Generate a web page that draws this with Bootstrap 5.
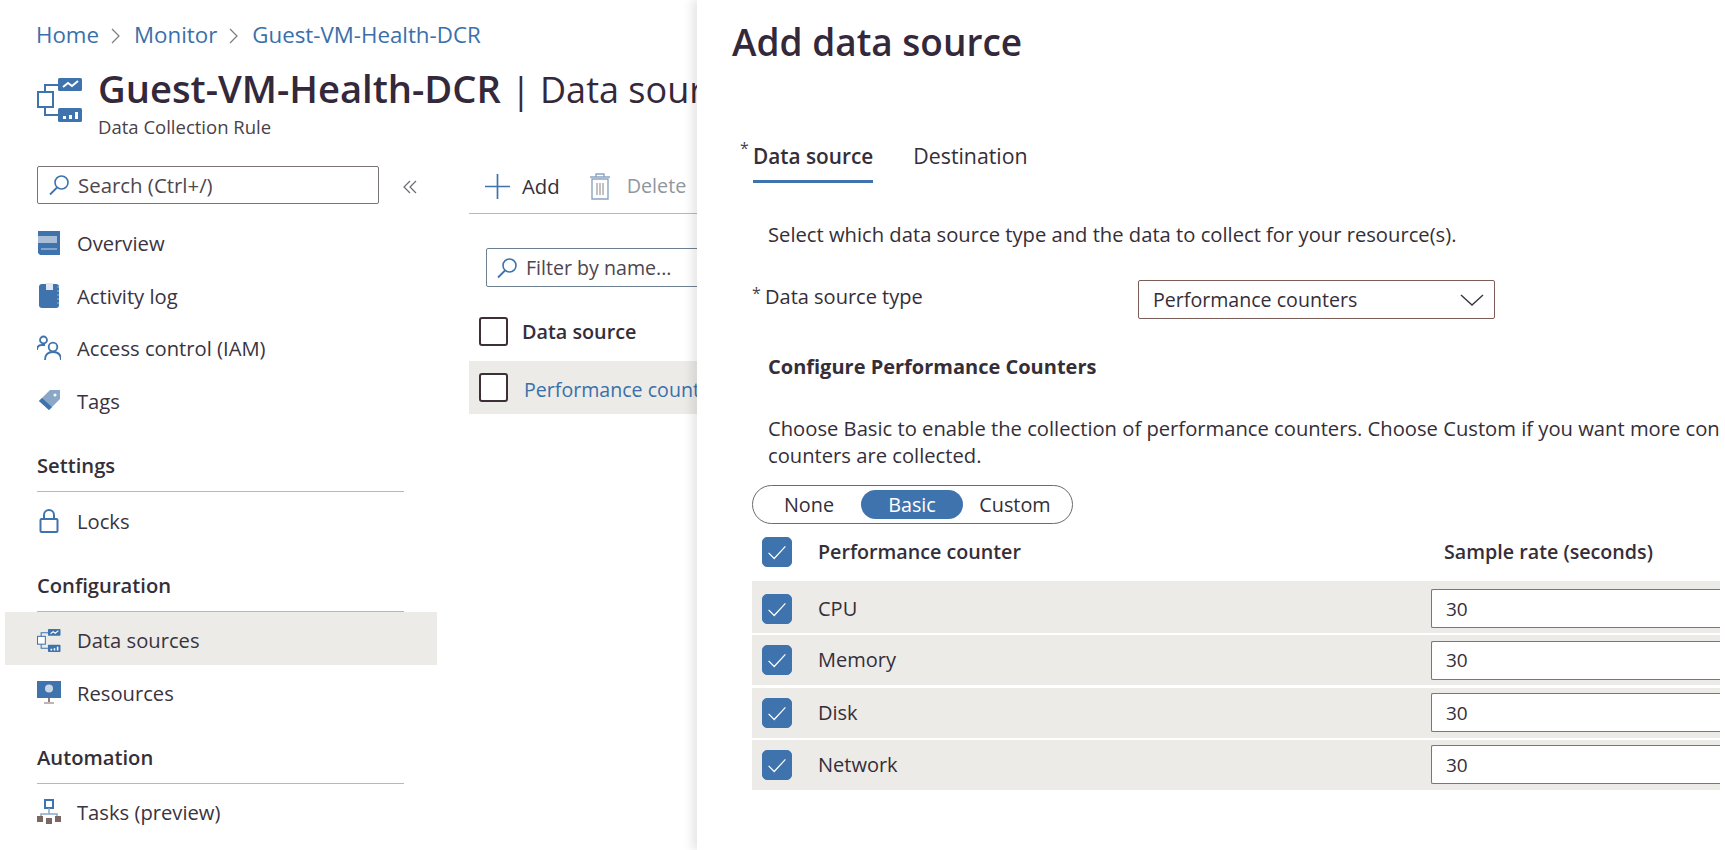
<!DOCTYPE html>
<html lang="en">
<head>
<meta charset="utf-8">
<title>Add data source</title>
<link href="https://cdn.jsdelivr.net/npm/bootstrap@5.3.0/dist/css/bootstrap.min.css" rel="stylesheet">
<style>
:root{--az-blue:#3f73ad;--az-text:#352e38;--az-row:#ecebe8;--az-line:#a9bccf;}
html,body{height:850px;overflow:hidden;background:#fff;}
body{font-family:"Open Sans","Noto Sans",sans-serif;color:var(--az-text);font-size:20px;}
.shell{height:850px;width:1720px;overflow:hidden;}
.blade{width:697px;flex:none;overflow:hidden;}
.crumbs{--bs-breadcrumb-divider:none;--bs-breadcrumb-item-padding-x:0;margin:0;padding:18px 0 0 36px;height:68px;font-size:22.3px;white-space:nowrap;flex-wrap:nowrap;}
.crumbs .breadcrumb-item+.breadcrumb-item::before{display:none;}
.crumbs a{color:#3a70aa;text-decoration:none;}
.crumbs svg{margin:0 13px 0 12px;vertical-align:-1px;}
.bladehead{padding-left:37px;height:98px;white-space:nowrap;}
.bladehead h1{font-size:38.2px;line-height:38px;margin:0;font-weight:600;color:#33293a;padding-top:1px;}
.bladehead h1 span{font-weight:400;font-size:36px;}
.bladesub{font-size:18.5px;line-height:22px;margin-top:7px;color:#4a4148;}
.sidebar{width:432px;flex:none;margin-left:5px;}
.searchrow{padding-left:32px;height:49px;}
.searchbox{width:342px;height:38px;border:1px solid #7b7474;border-radius:2px;padding:0 10px;font-size:20.4px;color:#4d4650;}
.collapse-mark{margin:14px 0 0 24px;}
.navrow{height:52.6px;padding:4px 0 0 32px;font-size:20.2px;color:#3a3340;text-decoration:none;}
.navrow svg{width:24px;height:26px;flex:none;margin-right:16px;}
.navrow.is-on{background:var(--az-row);}
.grouphead{height:67px;margin:0 33px 0 32px;padding-top:26px;line-height:28px;font-size:20.2px;font-weight:600;border-bottom:1px solid var(--az-line);}
.mainpane{flex:1;min-width:0;overflow:hidden;margin-left:32px;}
.cmdbar{height:49px;border-bottom:1px solid var(--az-line);margin-top:-1px;padding:0 0 6px 16px;white-space:nowrap;font-size:20.3px;}
.cmdbar .cmd-off{color:#8f979f;font-size:19.8px;margin-left:16px;}
.trash{margin-left:29px;}
.filterbox{width:300px;height:39px;border:1px solid #6f7f92;border-radius:2px;margin:34px 0 0 17px;padding:0 9px;font-size:19.6px;color:#4d4650;white-space:nowrap;}
.listhead{height:29px;margin:30px 0 15px 10px;font-weight:600;font-size:19.8px;}
.listrow{height:53px;background:var(--az-row);padding-left:10px;font-size:19.6px;white-space:nowrap;}
.listrow a{color:#3a70aa;text-decoration:none;padding-top:5px;margin-left:2px;}
.plainbox{width:29px;height:29px;flex:none;margin:0 14px 0 0;border:2px solid #3c2f38;border-radius:3px;background:#fff;}
.panel{width:1023px;flex:none;height:850px;overflow:hidden;background:#fff;box-shadow:-5px 0 9px rgba(60,50,50,.12);position:relative;}
.panel h2{font-size:37px;font-weight:600;line-height:44px;margin:20px 0 0 35px;color:#33293a;}
.tabsrow{margin:64px 0 0 43px;height:55px;font-size:21.3px;}
.tabsrow .tabitem{height:55px;padding-top:13px;line-height:30px;margin-right:40px;position:relative;}
.tabsrow .tabitem.is-on{border-bottom:3px solid var(--az-blue);font-weight:600;font-size:20.8px;margin-left:13px;}
.req{position:absolute;left:-13px;top:11px;font-size:16px;line-height:18px;color:#4a4148;font-weight:400;}
.panelbody{padding-left:71px;font-size:20.2px;white-space:nowrap;}
.intro{margin:38px 0 0;line-height:26px;}
.typerow{margin:33px 0 0;height:39px;}
.typelabel{width:373px;position:relative;margin-left:-3px;padding-bottom:6px;font-size:20px;}
.typelabel .req{left:-13px;top:2px;}
.typeselect{width:357px;height:39px;padding:0 14px;font-size:19.6px;color:var(--az-text);border:1px solid #7b5d58;border-radius:2px;background-size:26px 14px;background-position:right 9px center;--bs-form-select-bg-img:url("data:image/svg+xml,%3csvg xmlns='http://www.w3.org/2000/svg' viewBox='0 0 26 14'%3e%3cpath fill='none' stroke='%233a3340' stroke-width='1.4' d='M2 2l11 10L24 2'/%3e%3c/svg%3e");}
.cfghead{margin:35px 0 0;line-height:26px;font-weight:700;font-size:20px;}
.cfgtext{margin:35px 0 0;line-height:26.5px;}
.segwrap{margin:17px 0 0 -16px;width:321px;height:39px;border:1px solid #6f6a6d;border-radius:20px;padding:4px;}
.segbtn{--bs-btn-padding-y:0;--bs-btn-padding-x:0;--bs-btn-font-size:19.8px;--bs-btn-color:var(--az-text);--bs-btn-hover-color:var(--az-text);--bs-btn-border-width:0;width:104px;height:29px;line-height:29px;border-radius:15px;}
.segbtn.is-on{background:var(--az-blue);color:#fff;width:102px;}
.counters{margin:13px 0 0 -16px;}
.countrow{padding-left:10px;height:30px;}
.counterhead{font-weight:600;height:44px;font-size:19.7px;line-height:30px;}
.counterlist{gap:2.3px;}
.countitem{background:var(--az-row);height:50px;padding-left:10px;font-size:20px;}
.countitem.first{height:52px;padding-top:3px;}
.tick{width:30px;height:30px;margin:0 26px 0 0;flex:none;border-radius:3px;background-size:100%;}
.tick:checked[type=checkbox]{background-color:var(--az-blue);border-color:var(--az-blue);--bs-form-check-bg-image:url("data:image/svg+xml,%3csvg xmlns='http://www.w3.org/2000/svg' viewBox='0 0 30 30'%3e%3cpath fill='none' stroke='%23fff' stroke-width='1.3' d='M6 16l6 6L24 9'/%3e%3c/svg%3e");}
.ratecol{margin-left:auto;width:289px;flex:none;}
.ratehead{padding-left:13px;}
.rateinput{height:39px;width:100%;border:1px solid #7c7577;border-right:0;border-radius:2px 0 0 2px;padding:0 14px;font-size:19px;color:var(--az-text);}
.hdicon{flex:none;margin:8px 15px 0 0;}
</style>
</head>
<body>
<svg width="0" height="0" class="d-block" aria-hidden="true">
  <symbol id="ic-dcr" viewBox="0 0 46 46">
    <path d="M8 16V9h13M8 31v8h13" fill="none" stroke="#3f73ad" stroke-width="2"/>
    <rect x="21" y="2" width="24" height="13" rx="1.5" fill="#3f73ad"/>
    <path d="M26 11l5-4 4 3 6-5" fill="none" stroke="#fff" stroke-width="2"/>
    <rect x="21" y="32" width="24" height="14" rx="1.5" fill="#3f73ad"/>
    <path d="M26 40h3v3h-3zM32 39h3v4h-3zM38 36h3v7h-3z" fill="#fff"/>
    <rect x="1" y="16" width="15" height="15" fill="#fff" stroke="#3f73ad" stroke-width="2"/>
  </symbol>
  <symbol id="ic-search" viewBox="0 0 22 22">
    <circle cx="13.5" cy="8.5" r="6.5" fill="none" stroke="#3f73ad" stroke-width="1.6"/>
    <path d="M9 13.5L2 20.5" stroke="#3f73ad" stroke-width="1.8" fill="none"/>
  </symbol>
</svg>

<div class="shell d-flex">
  <section class="blade d-flex flex-column">
    <ol class="breadcrumb crumbs">
      <li class="breadcrumb-item"><a href="#">Home</a><svg width="10" height="16" viewBox="0 0 10 16"><path d="M1 1l7 7-7 7" fill="none" stroke="#7b7b80" stroke-width="1.2"/></svg></li>
      <li class="breadcrumb-item"><a href="#">Monitor</a><svg width="10" height="16" viewBox="0 0 10 16"><path d="M1 1l7 7-7 7" fill="none" stroke="#7b7b80" stroke-width="1.2"/></svg></li>
      <li class="breadcrumb-item"><a href="#">Guest-VM-Health-DCR</a></li>
    </ol>
    <header class="bladehead d-flex">
      <svg width="46" height="46" class="hdicon"><use href="#ic-dcr"/></svg>
      <div>
        <h1>Guest-VM-Health-DCR <span>| Data sources</span></h1>
        <div class="bladesub">Data Collection Rule</div>
      </div>
    </header>
    <div class="d-flex flex-fill">
      <nav class="sidebar">
        <div class="searchrow d-flex">
          <div class="searchbox d-flex align-items-center gap-2"><svg width="22" height="22"><use href="#ic-search"/></svg><span>Search (Ctrl+/)</span></div>
          <svg class="collapse-mark" width="14" height="14" viewBox="0 0 14 14"><path d="M7 1L1 7l6 6M13 1L7 7l6 6" fill="none" stroke="#6d6a70" stroke-width="1.2"/></svg>
        </div>
        <a class="navrow d-flex align-items-center" href="#"><svg viewBox="0 0 24 26"><path d="M1 1h22v24H3l-2-2z" fill="#3f73ad"/><path d="M1 6h19v7H1z" fill="#a9bdd6"/><path d="M4 19h16" stroke="#c9d6e6" stroke-width="1"/></svg>Overview</a>
        <a class="navrow d-flex align-items-center" href="#"><svg viewBox="0 0 24 26"><rect x="2" y="1" width="20" height="24" rx="3" fill="#3f73ad"/><path d="M9 0h7v7H9z" fill="#dfe7f0"/><path d="M21 3v20" stroke="#9db5d1" stroke-dasharray="2 2"/></svg>Activity log</a>
        <a class="navrow d-flex align-items-center" href="#"><svg viewBox="0 0 24 26"><g fill="none" stroke="#3f73ad" stroke-width="1.8"><circle cx="6.5" cy="5" r="3.5"/><path d="M0 15c0-3 2-5 5-5h3"/><circle cx="16" cy="12" r="4.3"/><path d="M8 25c0-5 3-8 8-8s8 3 8 8"/></g></svg>Access control (IAM)</a>
        <a class="navrow d-flex align-items-center" href="#"><svg viewBox="0 0 24 26"><path d="M2 13L13 2l10 0v9L12 22z" fill="#8aa7c8"/><path d="M2 13l10 9 3-3L5 10z" fill="#3f73ad"/><circle cx="18" cy="7" r="1.5" fill="#fff"/></svg>Tags</a>
        <div class="grouphead">Settings</div>
        <a class="navrow d-flex align-items-center" href="#"><svg viewBox="0 0 24 26"><g fill="none" stroke="#3f73ad" stroke-width="2"><rect x="3.5" y="11" width="17" height="13" rx="1"/><path d="M7 11V7a5 5 0 0 1 10 0v4"/></g></svg>Locks</a>
        <div class="grouphead">Configuration</div>
        <a class="navrow is-on d-flex align-items-center" href="#"><svg viewBox="0 0 46 46"><use href="#ic-dcr"/></svg>Data sources</a>
        <a class="navrow d-flex align-items-center" href="#"><svg viewBox="0 0 24 26"><rect x="0" y="1" width="24" height="17" fill="#3f73ad"/><circle cx="12" cy="8.5" r="4" fill="#c9d6e6"/><path d="M11 18h2v4h-2z" fill="#8d7f7c"/><path d="M7 23h10" stroke="#a99e9a" stroke-width="1.5"/></svg>Resources</a>
        <div class="grouphead">Automation</div>
        <a class="navrow d-flex align-items-center" href="#"><svg viewBox="0 0 24 26"><rect x="8" y="1" width="8" height="8" fill="#fff" stroke="#3f73ad" stroke-width="2"/><path d="M12 9v6M4 17v-2h16v2" fill="none" stroke="#8aa7c8" stroke-width="1.5"/><path d="M0 17h6v6H0zM9 19h6v6H9zM18 17h6v6h-6z" fill="#7b6662"/></svg>Tasks (preview)</a>
      </nav>
      <div class="mainpane">
        <div class="cmdbar d-flex align-items-center">
          <svg width="25" height="25" viewBox="0 0 25 25" class="me-2"><path d="M12.5 0v25M0 12.5h25" stroke="#3f73ad" stroke-width="1.7"/></svg>
          <span class="ms-1">Add</span>
          <svg width="22" height="27" viewBox="0 0 22 27" class="trash"><g fill="none" stroke="#8aa4c0" stroke-width="1.4"><path d="M3 6h16v20H3zM1 4h20M7 4V1h8v3"/><path d="M8 10v12M11 10v12M14 10v12" stroke="#a7a7a7"/></g></svg>
          <span class="cmd-off">Delete</span>
        </div>
        <div class="filterbox d-flex align-items-center gap-2"><svg width="22" height="22"><use href="#ic-search"/></svg><span>Filter by name...</span></div>
        <div class="listhead d-flex align-items-center"><span class="plainbox"></span>Data source</div>
        <div class="listrow d-flex align-items-center"><span class="plainbox"></span><a href="#">Performance counters</a></div>
      </div>
    </div>
  </section>

  <section class="panel">
    <h2>Add data source</h2>
    <div class="tabsrow d-flex">
      <div class="tabitem is-on"><span class="req">*</span>Data source</div>
      <div class="tabitem">Destination</div>
    </div>
    <div class="panelbody">
      <p class="intro">Select which data source type and the data to collect for your resource(s).</p>
      <div class="typerow d-flex align-items-center">
        <div class="typelabel"><span class="req">*</span>Data source type</div>
        <select class="form-select typeselect" aria-label="Data source type"><option>Performance counters</option></select>
      </div>
      <p class="cfghead">Configure Performance Counters</p>
      <p class="cfgtext">Choose Basic to enable the collection of performance counters. Choose Custom if you want more control over how the performance<br>counters are collected.</p>
      <div class="segwrap d-flex">
        <button type="button" class="btn segbtn">None</button>
        <button type="button" class="btn segbtn is-on">Basic</button>
        <button type="button" class="btn segbtn">Custom</button>
      </div>
      <div class="counters">
        <div class="countrow counterhead d-flex align-items-start">
          <input class="form-check-input tick" type="checkbox" checked aria-label="All counters">
          <span>Performance counter</span>
          <span class="ratecol ratehead">Sample rate (seconds)</span>
        </div>
        <div class="counterlist d-flex flex-column">
          <div class="countitem first d-flex align-items-center"><input class="form-check-input tick" type="checkbox" checked aria-label="CPU"><span>CPU</span><div class="ratecol"><input class="form-control rateinput" value="30" aria-label="CPU rate"></div></div>
          <div class="countitem d-flex align-items-center"><input class="form-check-input tick" type="checkbox" checked aria-label="Memory"><span>Memory</span><div class="ratecol"><input class="form-control rateinput" value="30" aria-label="Memory rate"></div></div>
          <div class="countitem d-flex align-items-center"><input class="form-check-input tick" type="checkbox" checked aria-label="Disk"><span>Disk</span><div class="ratecol"><input class="form-control rateinput" value="30" aria-label="Disk rate"></div></div>
          <div class="countitem d-flex align-items-center"><input class="form-check-input tick" type="checkbox" checked aria-label="Network"><span>Network</span><div class="ratecol"><input class="form-control rateinput" value="30" aria-label="Network rate"></div></div>
        </div>
      </div>
    </div>
  </section>
</div>
<script src="https://cdn.jsdelivr.net/npm/bootstrap@5.3.0/dist/js/bootstrap.bundle.min.js"></script>
</body>
</html>
